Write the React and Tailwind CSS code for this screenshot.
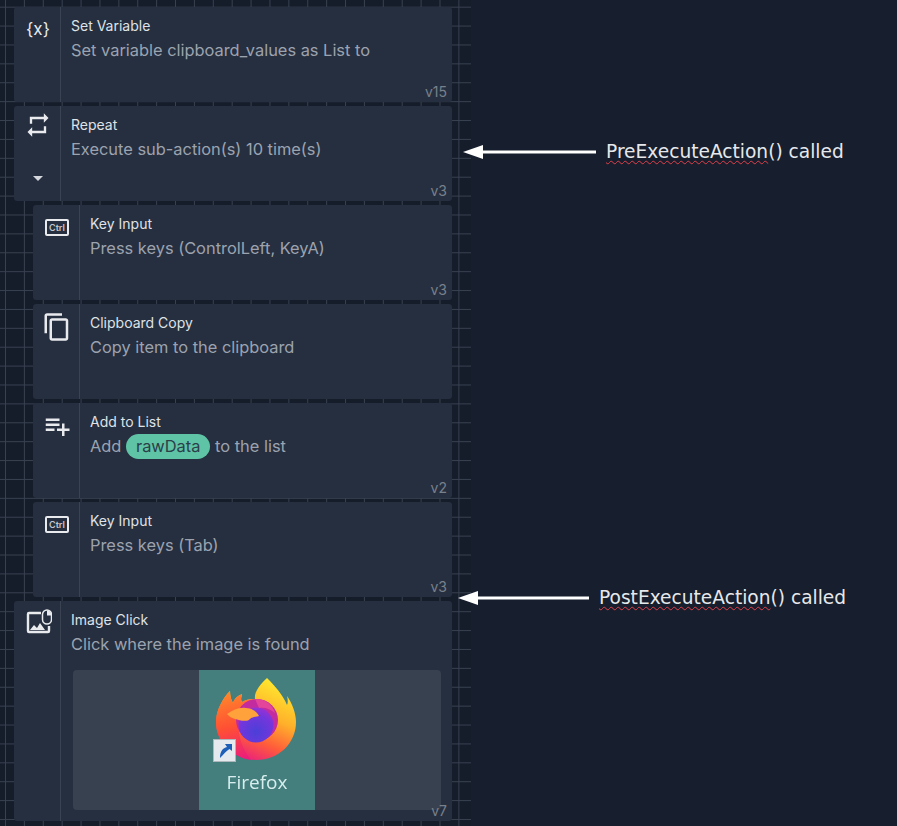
import { MdRepeat, MdPlaylistAdd, MdOutlineContentCopy, MdArrowDropDown } from 'react-icons/md'

function CtrlIcon() {
  return (
    <div className="mt-[10px] flex h-[17px] w-[24px] items-center justify-center rounded-[2px] border-2 border-[#e8eaed] text-[9px] font-semibold leading-none text-[#c3c7cd]">
      Ctrl
    </div>
  )
}

function VarIcon() {
  return <div className="mt-[8px] text-[17px] leading-[20px] text-[#e8eaed]">{'{x}'}</div>
}

function ImageClickIcon() {
  return (
    <svg width="26" height="26" viewBox="0 0 26 26" className="mt-[4px] ml-[2px]" fill="none">
      <path d="M15 4H3a1 1 0 0 0-1 1v17a1 1 0 0 0 1 1h19a1 1 0 0 0 1-1v-5" stroke="#e8eaed" strokeWidth="2.4" />
      <path d="M4 21l4-5 3 3 3-5 5 7z" fill="#e8eaed" />
      <rect x="16.500" y="1" width="9" height="14" rx="4.500" stroke="#e8eaed" strokeWidth="1.500" />
      <path d="M21 1.500v5h4.500V5.500A4.500 4.500 0 0 0 21 1.500z" fill="#e8eaed" />
    </svg>
  )
}

function FirefoxLogo() {
  return (
    <svg viewBox="0 0 116 100" width="116" height="100">
      <defs>
        <linearGradient id="ffBody" gradientUnits="userSpaceOnUse" x1="78" y1="12" x2="42" y2="92">
          <stop offset="0" stopColor="#ffe82e" />
          <stop offset="0.4" stopColor="#ffb02a" />
          <stop offset="0.7" stopColor="#ff5c3a" />
          <stop offset="1" stopColor="#e5158a" />
        </linearGradient>
        <linearGradient id="ffLeft" gradientUnits="userSpaceOnUse" x1="30" y1="20" x2="50" y2="90">
          <stop offset="0" stopColor="#ff8a2a" />
          <stop offset="0.5" stopColor="#ff4f34" />
          <stop offset="1" stopColor="#ea1a80" />
        </linearGradient>
        <radialGradient id="ffGlobe" cx="0.5" cy="0.7" r="0.8">
          <stop offset="0" stopColor="#4b3fd8" />
          <stop offset="0.6" stopColor="#7336dc" />
          <stop offset="1" stopColor="#a92fd0" />
        </radialGradient>
      </defs>
      <path d="M68 8C60 15 55 23 56 29C50 29 46 30 43 32C41 29 43 26 43 24C38 26 35 29 34 33C32 30 31 25 31 21C24 28 17 40 17 52C17 74 36 90 57 90C80 90 97 73 97 52C97 43 93 33 88 26C89 30 89 33 88 35C84 25 76 16 68 8Z" fill="url(#ffBody)" />
      <path d="M31 21C24 28 17 40 17 52C17 72 33 87 52 90C44 80 38 66 40 50L56 29C50 29 46 30 43 32C41 29 43 26 43 24C38 26 35 29 34 33C32 30 31 25 31 21Z" fill="url(#ffLeft)" />
      <circle cx="58" cy="50" r="21" fill="#c22c9e" />
      <circle cx="57" cy="55" r="17.500" fill="url(#ffGlobe)" />
      <path d="M56 29C66 28 74 35 76 43C71 39 66 37 60 38Z" fill="#e2459a" />
      <path d="M28 44C34 40 40 37 47 38C53 38 58 42 60 46C56 47 52 47 50 50C46 52 40 50 36 49C32 48 30 46 28 44Z" fill="#ffa23c" />
      <rect x="14.500" y="69.500" width="22" height="22" fill="#e4eaee" stroke="#aeb7bc" />
      <path d="M21 88C21 81 24 78 28 77L26 74H33V81L30.500 79C27 81 25 84 21 88Z" fill="#1e5fb8" />
    </svg>
  )
}

function Card({ indent, icon, title, desc, version, children, caret }) {
  return (
    <div className={`relative flex min-h-[95px] rounded-[3px] bg-[#262f3f] ${indent ? 'ml-[33px]' : 'ml-[14px]'}`}>
      <div className="flex w-[47px] shrink-0 flex-col items-center border-r border-[#3a4352] pt-[4px] pl-[2px]">
        <div className="flex h-[30px] items-start justify-center">{icon}</div>
        {caret && <MdArrowDropDown className="mt-[26px] text-[24px] text-[#d4d7dc]" />}
      </div>
      <div className="min-w-0 flex-1 pl-[10px] pt-[11px]">
        <div className="text-[14px] leading-[16px] text-[#dfe2e6]">{title}</div>
        <div className="mt-[4px] text-[16.4px] leading-[24px] text-[#9ca3af]">{desc}</div>
        {children}
      </div>
      <span className="absolute right-[5px] bottom-[2px] text-[14px] leading-[16px] text-[#78808c]">{version}</span>
    </div>
  )
}

function Note({ top, left, shaft, name }) {
  return (
    <div className={`absolute flex items-center ${top} ${left}`}>
      <svg width={shaft + 20} height="16" viewBox={`0 0 ${shaft + 20} 16`}>
        <path d="M0 8L20 1V15Z" fill="#fff" />
        <rect x="19" y="6.500" width={shaft} height="3" fill="#fff" />
      </svg>
      <div className="mt-[1px] ml-[9px] whitespace-nowrap text-[18.6px] leading-[24px] text-[#e6e8eb] [font-family:'DejaVu_Sans',sans-serif]">
        <span className="underline decoration-[#e0404a] decoration-wavy decoration-1 underline-offset-2">{name}</span>() called
      </div>
    </div>
  )
}

export default function App() {
  return (
    <div className="relative h-[826px] w-[897px] overflow-hidden bg-[#171e2d] font-['Inter',sans-serif]">
      <div className="h-full w-[471px] bg-[#151c2a] bg-[linear-gradient(to_right,#384150_1px,transparent_1px),linear-gradient(to_bottom,#384150_1px,transparent_1px)] bg-[size:18.9px_18.9px] bg-[position:5px_6.7px]">
        <div className="flex w-[452px] flex-col gap-[4px] pt-[7px]">
          <Card icon={<VarIcon />} title="Set Variable" desc="Set variable clipboard_values as List to" version="v15" />
          <Card caret icon={<MdRepeat className="mt-[1px] text-[28px] text-[#e8eaed]" />} title="Repeat" desc="Execute sub-action(s) 10 time(s)" version="v3" />
          <Card indent icon={<CtrlIcon />} title="Key Input" desc="Press keys (ControlLeft, KeyA)" version="v3" />
          <Card indent icon={<MdOutlineContentCopy className="mt-[4px] text-[30px] text-[#e8eaed]" />} title="Clipboard Copy" desc="Copy item to the clipboard" />
          <Card
            indent
            icon={<MdPlaylistAdd className="mt-[4px] text-[30px] text-[#e8eaed]" />}
            title="Add to List"
            desc={
              <span>
                Add <span className="inline-block rounded-full bg-[#5fc4a6] px-[10px] leading-[25px] text-[#2b3f4a]">rawData</span> to the list
              </span>
            }
            version="v2"
          />
          <Card indent icon={<CtrlIcon />} title="Key Input" desc="Press keys (Tab)" version="v3" />
          <Card icon={<ImageClickIcon />} title="Image Click" desc="Click where the image is found" version="v7">
            <div className="mt-[14px] mr-[11px] mb-[11px] ml-[2px] flex h-[140px] justify-center rounded-[4px] bg-[#384150]">
              <div className="flex w-[116px] flex-col items-center bg-[#447f7e] blur-[0.4px]">
                <FirefoxLogo />
                <div className="text-[19px] leading-[24px] text-[#d8eeee] [font-family:'Open_Sans',sans-serif]">Firefox</div>
              </div>
            </div>
          </Card>
        </div>
      </div>
      <Note top="top-[139px]" left="left-[463px]" shaft={114} name="PreExecuteAction" />
      <Note top="top-[585px]" left="left-[458px]" shaft={112} name="PostExecuteAction" />
    </div>
  )
}
